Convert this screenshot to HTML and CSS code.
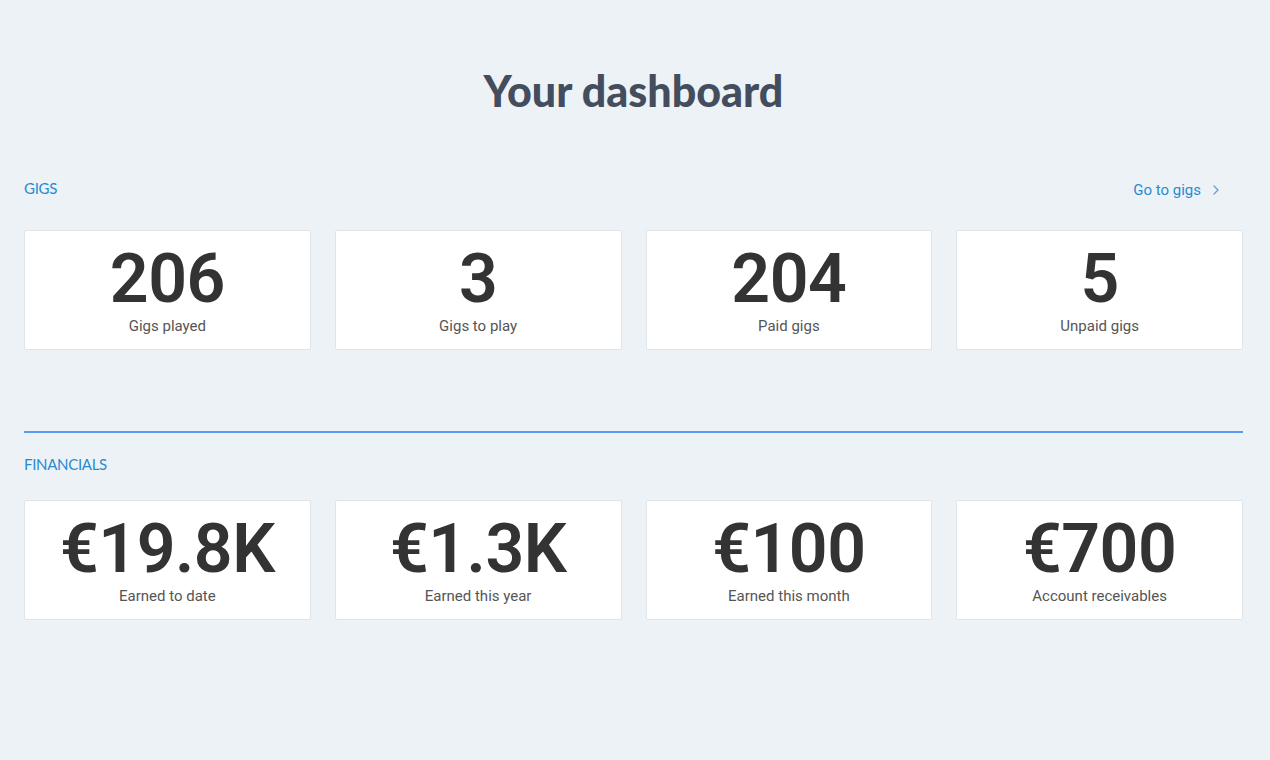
FILE: index.html
```html
<!DOCTYPE html>
<html lang="en">
<head>
<meta charset="utf-8">
<title>Your dashboard</title>
<link rel="stylesheet" href="styles.css">
</head>
<body>
<main class="page">
  <h1 class="title">Your dashboard</h1>

  <section class="section gigs">
    <div class="section-head">
      <h2 class="section-label">GIGS</h2>
      <a class="section-link" href="#">Go to gigs
        <svg class="chev" width="8" height="12" viewBox="0 0 8 12"><path d="M2 2l4 4-4 4" fill="none" stroke="currentColor" stroke-width="1.2" stroke-linecap="round" stroke-linejoin="round"/></svg>
      </a>
    </div>
    <div class="cards">
      <div class="card"><div class="num">206</div><div class="label">Gigs played</div></div>
      <div class="card"><div class="num">3</div><div class="label">Gigs to play</div></div>
      <div class="card"><div class="num">204</div><div class="label">Paid gigs</div></div>
      <div class="card"><div class="num">5</div><div class="label">Unpaid gigs</div></div>
    </div>
  </section>

  <hr class="divider">

  <section class="section fin">
    <div class="section-head">
      <h2 class="section-label">FINANCIALS</h2>
    </div>
    <div class="cards">
      <div class="card"><div class="num">€19.8K</div><div class="label">Earned to date</div></div>
      <div class="card"><div class="num">€1.3K</div><div class="label">Earned this year</div></div>
      <div class="card"><div class="num">€100</div><div class="label">Earned this month</div></div>
      <div class="card"><div class="num">€700</div><div class="label">Account receivables</div></div>
    </div>
  </section>
</main>
</body>
</html>
```

FILE: styles.css
```css
html, body {
  margin: 0;
  padding: 0;
  background: #edf2f6;
}
body {
  font-family: "Roboto", "Liberation Sans", sans-serif;
  color: #333;
  width: 1270px;
  height: 760px;
  overflow: hidden;
}
.page {
  padding: 0 27px 0 24px;
}
.title {
  margin: 0;
  padding-top: 63px;
  height: 56px;
  text-align: center;
  font-family: "Lato", "Liberation Sans", sans-serif;
  font-weight: 900;
  font-size: 43px;
  line-height: 56px;
  color: #434d5e;
}
.section-head {
  display: flex;
  justify-content: space-between;
  align-items: center;
  height: 22px;
}
.gigs .section-head {
  margin-top: 58px;
}
.section-label {
  margin: 0;
  font-family: "Lato", "Liberation Sans", sans-serif;
  font-weight: 400;
  font-size: 15px;
  letter-spacing: -0.3px;
  color: #2a8ad0;
}
.section-link {
  display: flex;
  align-items: center;
  gap: 11px;
  margin-right: 23px;
  margin-top: 4px;
  text-decoration: none;
  font-size: 15px;
  color: #2a8ad0;
}
.chev { color: #6a9cc8; }
.cards {
  display: grid;
  grid-template-columns: repeat(4, 1fr);
  gap: 24px;
  margin-top: 31px;
}
.card {
  background: #fff;
  border: 1px solid #dfe4e8;
  border-radius: 2px;
  height: 118px;
  display: flex;
  flex-direction: column;
  align-items: center;
}
.num {
  font-family: "Roboto", "Liberation Sans", sans-serif;
  font-weight: 600;
  font-size: 68px;
  line-height: 1;
  margin-top: 14px;
  color: #333;
  letter-spacing: -0.5px;
}
.label {
  font-size: 15px;
  color: #555;
  margin-top: 4px;
}
.divider {
  border: 0;
  height: 2px;
  background: #5b9af0;
  margin: 81px 0 0;
}
.fin .section-head {
  margin-top: 20px;
}
.fin .cards {
  margin-top: 25px;
}
```
